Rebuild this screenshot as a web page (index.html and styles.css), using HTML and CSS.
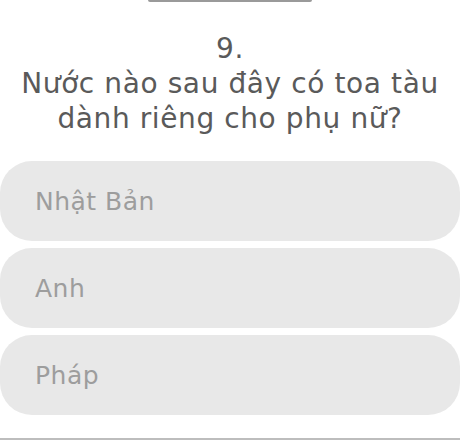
FILE: index.html
```html
<!DOCTYPE html>
<html lang="vi">
<head>
<meta charset="utf-8">
<link rel="stylesheet" href="styles.css">
</head>
<body>
<div class="screen">
  <div class="handle"></div>
  <div class="question">
    <div class="num">9.</div>
    <div class="text">Nước nào sau đây có toa tàu dành riêng cho phụ nữ?</div>
  </div>
  <div class="options">
    <div class="option">Nhật Bản</div>
    <div class="option">Anh</div>
    <div class="option">Pháp</div>
  </div>
  <div class="divider"></div>
</div>
</body>
</html>
```
FILE: styles.css
```css
html, body {
  margin: 0;
  padding: 0;
  background: #ffffff;
}
.screen {
  width: 460px;
  height: 440px;
  display: flex;
  flex-direction: column;
  font-family: "DejaVu Sans", "Noto Sans", sans-serif;
}
.handle {
  width: 164px;
  height: 2px;
  margin: 0 0 0 148px;
  background: #9a9a9a;
  border-radius: 0 0 3px 3px;
}
.question {
  margin-top: 29px;
  text-align: center;
  color: #5a5a5a;
  font-size: 28px;
  line-height: 35px;
  letter-spacing: 0.6px;
}
.options {
  margin-top: 25px;
  display: flex;
  flex-direction: column;
  gap: 7px;
}
.option {
  height: 80px;
  background: #e8e8e8;
  border-radius: 32px;
  display: flex;
  align-items: center;
  padding-left: 35px;
  font-size: 25px;
  letter-spacing: 0.5px;
  color: #9d9d9d;
}
.divider {
  margin-top: auto;
  height: 2px;
  background: #bdbdbd;
}
```
